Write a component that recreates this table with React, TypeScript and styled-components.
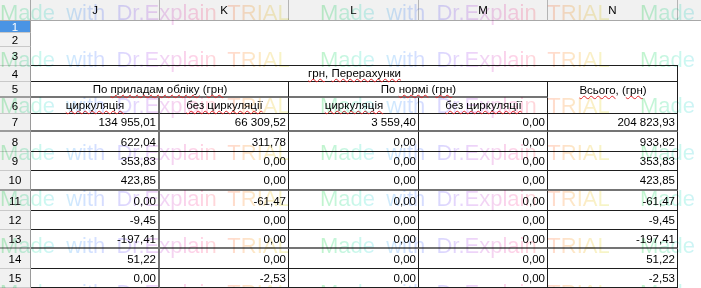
import * as React from 'react';
import styled, { createGlobalStyle } from 'styled-components';

const GlobalStyle = createGlobalStyle`
  *, *::before, *::after {
    box-sizing: border-box;
  }
  html, body {
    margin: 0;
    padding: 0;
    background: #ffffff;
  }
  body {
    font-family: 'Liberation Sans', Arial, sans-serif;
    overflow: hidden;
  }
`;

const LINE = '1px solid #1e1e1e';
const HEAVY = '2px solid #747474';

const Sheet = styled.div`
  position: relative;
  width: 701px;
  height: 288px;
  overflow: hidden;
  display: grid;
  grid-template-columns: 31px 129px 129px 130px 129px 130px 1fr;
  grid-template-rows: 21px 12px 14px 19px 16px 16px 16px 18px 20px 19px 20px 20px 19px 19px 20px 19px;
  font-size: 11.5px;
  color: #000;
  background: #fff;
`;

const Corner = styled.div`
  background: #f1f1f1;
  border-right: 1px solid #a8a8a8;
  border-bottom: 1px solid #a8a8a8;
`;

const ColHead = styled.div<{ $last?: boolean }>`
  display: flex;
  align-items: center;
  justify-content: center;
  background: #f1f1f1;
  border-right: ${p => (p.$last ? '0' : '1px solid #b4b4b4')};
  border-bottom: 1px solid #a8a8a8;
`;

const RowHead = styled.div<{ $selected?: boolean; $heavy?: boolean }>`
  display: flex;
  align-items: center;
  justify-content: center;
  background: ${p => (p.$selected ? '#4a94e4' : '#f1f1f1')};
  color: ${p => (p.$selected ? '#ffffff' : '#000')};
  border-right: 1px solid #9a9a9a;
  border-bottom: ${p => (p.$heavy ? '2px solid #9c9c9c' : '1px solid #c9c9c9')};
`;

type Align = 'left' | 'center' | 'right';

interface CellProps {
  $span?: number;
  $align?: Align;
  $right?: boolean;
  $bottom?: boolean;
  $heavyRight?: boolean;
  $heavyBottom?: boolean;
}

const justify = (a?: Align) =>
  a === 'right' ? 'flex-end' : a === 'center' ? 'center' : 'flex-start';

const Cell = styled.div<CellProps>`
  grid-column: span ${p => p.$span ?? 1};
  display: flex;
  align-items: center;
  justify-content: ${p => justify(p.$align)};
  padding: 0 2px 0 3px;
  white-space: nowrap;
  border-right: ${p => (p.$heavyRight ? HEAVY : p.$right ? LINE : '0')};
  border-bottom: ${p => (p.$heavyBottom ? HEAVY : p.$bottom ? LINE : '0')};
`;

const CellText = styled.span`
  display: inline-block;
  line-height: 13px;
`;

const Misspelt = styled.span`
  text-decoration: underline wavy #e2262b;
  text-decoration-thickness: 1px;
  text-underline-offset: 1px;
  text-decoration-skip-ink: none;
`;

const Watermark = styled.div`
  position: absolute;
  left: 0;
  top: -10px;
  pointer-events: none;
  mix-blend-mode: multiply;
  font-family: 'Liberation Sans', Arial, sans-serif;
  font-size: 22px;
  line-height: 46.6px;
  word-spacing: 5px;
  white-space: nowrap;
`;

const WatermarkLine = styled.div`
  display: flex;
`;

const Phrase = styled.span`
  flex: 0 0 320px;
  background: linear-gradient(
    90deg,
    #c0f4cc 0%,
    #ccf8f2 14%,
    #d0e6ff 24%,
    #d8d8ff 36%,
    #ecd4fa 47%,
    #ffd2e6 62%,
    #ffdccc 73%,
    #fde8c6 80%,
    #f8f4c6 88%,
    #e2facc 100%
  );
  -webkit-background-clip: text;
  background-clip: text;
  color: transparent;
`;

const columns = ['J', 'K', 'L', 'M', 'N'];

const data: string[][] = [
  ['134 955,01', '66 309,52', '3 559,40', '0,00', '204 823,93'],
  ['622,04', '311,78', '0,00', '0,00', '933,82'],
  ['353,83', '0,00', '0,00', '0,00', '353,83'],
  ['423,85', '0,00', '0,00', '0,00', '423,85'],
  ['0,00', '-61,47', '0,00', '0,00', '-61,47'],
  ['-9,45', '0,00', '0,00', '0,00', '-9,45'],
  ['-197,41', '0,00', '0,00', '0,00', '-197,41'],
  ['51,22', '0,00', '0,00', '0,00', '51,22'],
  ['0,00', '-2,53', '0,00', '0,00', '-2,53'],
];

// rows whose bottom grid line is drawn thicker in the screenshot
const heavyRows = [5, 7, 10, 13];

const App: React.FC = () => {
  return (
    <>
      <GlobalStyle />
      <Sheet>
        <Corner />
        {columns.map(c => (
          <ColHead key={c}>{c}</ColHead>
        ))}
        <ColHead $last />

        <RowHead $selected>1</RowHead>
        <Cell $span={6} />
        <RowHead>2</RowHead>
        <Cell $span={6} />
        <RowHead>3</RowHead>
        <Cell $span={5} $bottom />
        <Cell />

        <RowHead>4</RowHead>
        <Cell $span={5} $align="center" $right $bottom>
          <CellText>
            <Misspelt>грн</Misspelt>, <Misspelt>Перерахунки</Misspelt>
          </CellText>
        </Cell>
        <Cell />

        <RowHead $heavy>5</RowHead>
        <Cell $span={2} $align="center" $right $heavyBottom>
          <CellText>
            По <Misspelt>приладам обліку</Misspelt> (<Misspelt>грн</Misspelt>)
          </CellText>
        </Cell>
        <Cell $span={2} $align="center" $right $heavyBottom>
          <CellText>
            По <Misspelt>нормі</Misspelt> (<Misspelt>грн</Misspelt>)
          </CellText>
        </Cell>
        <Cell $align="center" $right>
          <CellText>
            <Misspelt>Всього</Misspelt>, (<Misspelt>грн</Misspelt>)
          </CellText>
        </Cell>
        <Cell />

        <RowHead>6</RowHead>
        <Cell $align="center" $heavyRight $bottom>
          <CellText>
            <Misspelt>циркуляція</Misspelt>
          </CellText>
        </Cell>
        <Cell $align="center" $right $bottom>
          <CellText>
            <Misspelt>без циркуляції</Misspelt>
          </CellText>
        </Cell>
        <Cell $align="center" $right $bottom>
          <CellText>
            <Misspelt>циркуляція</Misspelt>
          </CellText>
        </Cell>
        <Cell $align="center" $right $bottom>
          <CellText>
            <Misspelt>без циркуляції</Misspelt>
          </CellText>
        </Cell>
        <Cell $right $bottom />
        <Cell />

        {data.map((row, i) => {
          const n = i + 7;
          const heavy = heavyRows.includes(n);
          return (
            <React.Fragment key={n}>
              <RowHead $heavy={heavy}>{n}</RowHead>
              {row.map((v, j) => (
                <Cell
                  key={j}
                  $align="right"
                  $right
                  $heavyRight={j === 0}
                  $bottom
                  $heavyBottom={heavy}
                >
                  {v}
                </Cell>
              ))}
              <Cell />
            </React.Fragment>
          );
        })}

        <Watermark>
          {Array.from({ length: 7 }).map((_, i) => (
            <WatermarkLine key={i}>
              <Phrase>Made with Dr.Explain TRIAL</Phrase>
              <Phrase>Made with Dr.Explain TRIAL</Phrase>
              <Phrase>Made with Dr.Explain TRIAL</Phrase>
            </WatermarkLine>
          ))}
        </Watermark>
      </Sheet>
    </>
  );
};

export default App;
